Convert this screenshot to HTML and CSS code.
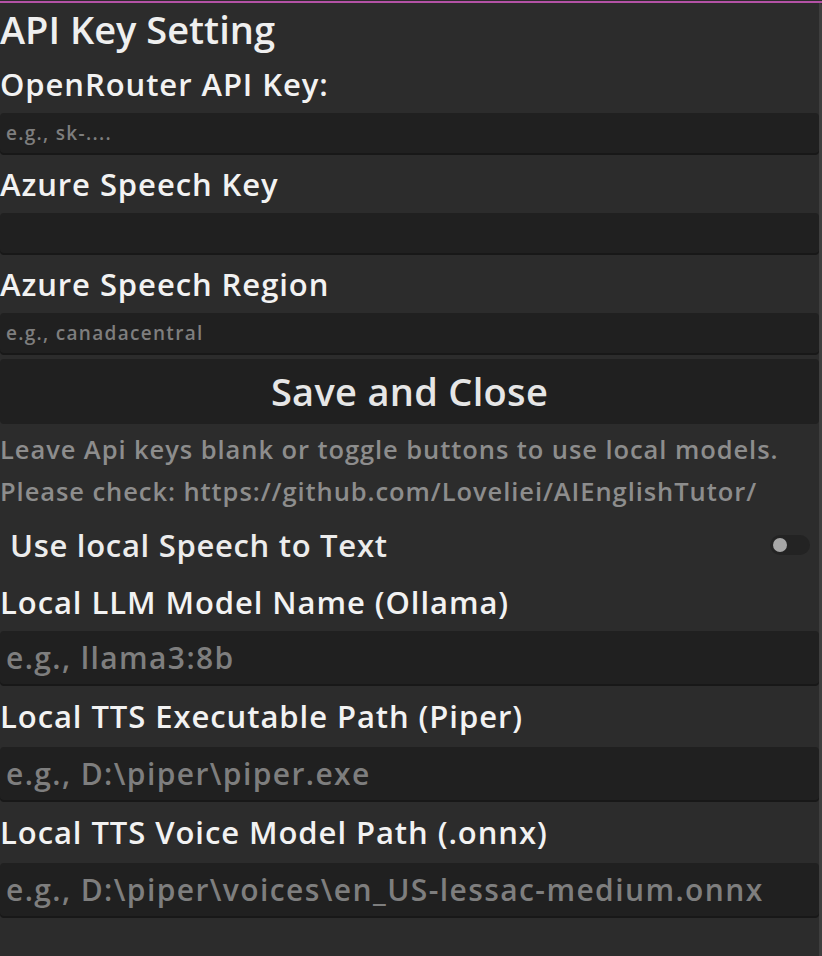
FILE: index.html
```html
<!DOCTYPE html>
<html lang="en">
<head>
<meta charset="utf-8">
<title>API Key Setting</title>
<link rel="stylesheet" href="styles.css">
</head>
<body>
<div class="window">
  <div class="panel">
    <div class="title">API Key Setting</div>
    <div class="label">OpenRouter API Key:</div>
    <div class="input small"><span class="ph">e.g., sk-....</span></div>
    <div class="label">Azure Speech Key</div>
    <div class="input small"><span class="ph"></span></div>
    <div class="label">Azure Speech Region</div>
    <div class="input small"><span class="ph">e.g., canadacentral</span></div>
    <div class="button">Save and Close</div>
    <div class="note">Leave Api keys blank or toggle buttons to use local models.<br>Please check: https://github.com/Loveliei/AIEnglishTutor/</div>
    <div class="toggle-row">
      <span class="toggle-label">Use local Speech to Text</span>
      <span class="switch"><span class="knob"></span></span>
    </div>
    <div class="label">Local LLM Model Name (Ollama)</div>
    <div class="input large"><span class="ph">e.g., llama3:8b</span></div>
    <div class="label tall">Local TTS Executable Path (Piper)</div>
    <div class="input large"><span class="ph">e.g., D:\piper\piper.exe</span></div>
    <div class="label tall">Local TTS Voice Model Path (.onnx)</div>
    <div class="input large"><span class="ph">e.g., D:\piper\voices\en_US-lessac-medium.onnx</span></div>
  </div>
</div>
</body>
</html>
```
FILE: styles.css
```css
html, body {
  margin: 0;
  padding: 0;
  background: #2c2c2c;
  width: 822px;
  height: 956px;
  overflow: hidden;
}

body {
  font-family: "Open Sans", "Noto Sans", sans-serif;
  font-weight: 600;
  color: #ececec;
}

.window {
  margin-top: 1px;
  border-top: 2px solid #b452a6;
  display: flex;
  height: 953px;
}

.panel {
  width: 819px;
  border-right: 3px solid #3e3e3e;
  border-top-right-radius: 3px;
  background: #2c2c2c;
  display: flex;
  flex-direction: column;
  gap: 4px;
}

.title {
  height: 52px;
  line-height: 52px;
  font-size: 38px;
  color: #efefef;
  white-space: nowrap;
}

.label {
  height: 50px;
  line-height: 50px;
  font-size: 31px;
  letter-spacing: 0.93px;
  color: #f2f2f2;
  white-space: nowrap;
}

.label.tall {
  height: 53px;
  line-height: 53px;
}

.input {
  background: #202020;
  border-radius: 4px;
  box-shadow: 0 2px 0 #181818;
  display: flex;
  align-items: center;
  padding-left: 6px;
  margin-bottom: 2px;
  color: #7e7e7e;
  white-space: nowrap;
}

.input.small {
  height: 40px;
  font-size: 19px;
  letter-spacing: 1.3px;
}

.input.large {
  height: 53px;
  font-size: 30px;
  letter-spacing: 1.4px;
}

.button {
  height: 65px;
  line-height: 65px;
  background: #202020;
  border-radius: 4px;
  text-align: center;
  font-size: 38px;
  letter-spacing: 0.3px;
  color: #e6e6e6;
}

.note {
  height: 84px;
  line-height: 42px;
  font-size: 25.5px;
  letter-spacing: 0.93px;
  color: #8d8d8d;
  white-space: nowrap;
}

.toggle-row {
  height: 57px;
  display: flex;
  align-items: center;
  justify-content: space-between;
  padding: 0 9px 0 10px;
}

.toggle-label {
  font-size: 31px;
  letter-spacing: 0.7px;
  color: #ececec;
  white-space: nowrap;
}

.switch {
  width: 40px;
  height: 20px;
  border-radius: 10px;
  background: #232323;
  display: flex;
  align-items: center;
  padding-left: 3px;
  box-sizing: border-box;
}

.knob {
  width: 14px;
  height: 14px;
  border-radius: 50%;
  background: #a6a6a6;
}
```
